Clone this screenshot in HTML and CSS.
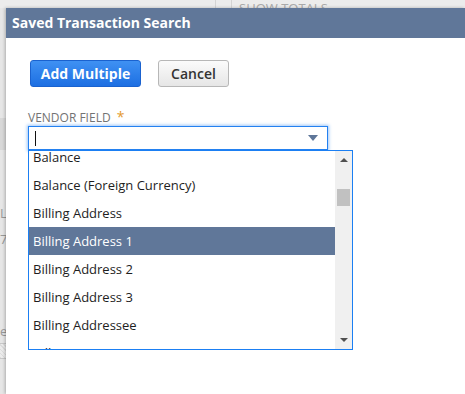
FILE: index.html
```html
<!DOCTYPE html>
<html lang="en">
<head>
    <meta charset="UTF-8">
    <meta name="viewport" content="width=device-width, initial-scale=1.0">
    <title>Saved Transaction Search</title>
    <link rel="stylesheet" href="styles.css">
</head>
<body>
    <div class="page">
        <div class="page-top">
            <span class="divider"></span>
            <span class="divider"></span>
            <span class="page-totals">SHOW TOTALS</span>
        </div>
        <div class="page-side">
            <div class="side-band"></div>
            <div class="side-text">LA</div>
            <div class="side-text">7:</div>
            <div class="side-text low">er</div>
            <div class="side-hatch"></div>
        </div>
    </div>

    <div class="dialog">
        <header class="dialog-title">Saved Transaction Search</header>

        <main class="dialog-body">
            <div class="actions">
                <button type="button" class="btn btn-primary">Add Multiple</button>
                <button type="button" class="btn btn-secondary">Cancel</button>
            </div>

            <label class="field-label" for="vendorField">Vendor Field <span class="required">*</span></label>
            <div class="combo">
                <div class="combo-input" id="vendorField">
                    <span class="caret"></span>
                    <span class="combo-arrow"></span>
                </div>
                <div class="combo-list">
                    <ul class="options">
                        <li>Balance</li>
                        <li>Balance (Foreign Currency)</li>
                        <li>Billing Address</li>
                        <li class="selected">Billing Address 1</li>
                        <li>Billing Address 2</li>
                        <li>Billing Address 3</li>
                        <li>Billing Addressee</li>
                        <li>Billing City</li>
                    </ul>
                    <div class="scrollbar">
                        <span class="scroll-up"></span>
                        <span class="scroll-thumb"></span>
                        <span class="scroll-down"></span>
                    </div>
                </div>
            </div>
        </main>
    </div>
</body>
</html>
```

FILE: styles.css
```css
body {
    margin: 0;
    padding: 0;
    width: 465px;
    height: 394px;
    overflow: hidden;
    background: #e6e6e6;
    font-family: 'Open Sans', 'Liberation Sans', sans-serif;
    color: #222;
}

/* page behind the dialog */
.page-top {
    display: flex;
    height: 8px;
    background: #ececec;
    overflow: hidden;
}

.divider {
    width: 1px;
    height: 8px;
    background: #d4d4d4;
    margin-left: 215px;
}

    .divider + .divider {
        margin-left: 15px;
    }

.page-totals {
    margin-left: 7px;
    margin-top: 0;
    font-size: 13px;
    line-height: 16px;
    color: #a9a9a9;
}

.page-side {
    width: 6px;
    display: flex;
    flex-direction: column;
    color: #999;
    font-size: 13px;
    overflow: hidden;
}

.side-band {
    height: 32px;
    margin-top: 110px;
    background: #d8d8d8;
}

.side-text {
    margin-top: 55px;
    line-height: 16px;
    white-space: nowrap;
}

    .side-text + .side-text {
        margin-top: 10px;
    }

    .side-text.low {
        margin-top: 76px;
    }

.side-hatch {
    height: 14px;
    margin-top: 4px;
    background: repeating-linear-gradient(45deg, #dcdcdc 0 1px, #ececec 1px 3px);
    border-top: 1px solid #c8c8c8;
    border-bottom: 1px solid #c8c8c8;
}

/* dialog */
.dialog {
    position: absolute;
    left: 6px;
    top: 8px;
    right: 0;
    bottom: 0;
    background: #fff;
    box-shadow: -1px 0 3px rgba(0, 0, 0, 0.25);
}

.dialog-title {
    height: 30px;
    line-height: 30px;
    padding-left: 6px;
    background: #607799;
    color: #fff;
    font-size: 14px;
    font-weight: 700;
}

.dialog-body {
    padding: 22px 0 0 22px;
}

.actions {
    display: flex;
    gap: 17px;
    margin-left: 2px;
}

.btn {
    height: 27px;
    padding: 0;
    border-radius: 3px;
    font-family: inherit;
    font-size: 14px;
    cursor: pointer;
}

.btn-primary {
    width: 111px;
    background: linear-gradient(#3f91f3, #1d6fe2);
    border: 1px solid #1a62cf;
    color: #fff;
    font-weight: 700;
}

.btn-secondary {
    width: 71px;
    background: linear-gradient(#fbfbfb, #e6e6e6);
    border: 1px solid #b7b7b7;
    color: #333;
    font-weight: 600;
}

.field-label {
    display: block;
    height: 16px;
    margin-top: 23px;
    font-size: 12px;
    line-height: 16px;
    color: #737373;
    text-transform: uppercase;
}

.required {
    color: #e49a2e;
    font-size: 14px;
    line-height: 1;
    margin-left: 3px;
}

.combo {
    width: 325px;
}

.combo-input {
    display: flex;
    align-items: center;
    justify-content: space-between;
    box-sizing: border-box;
    width: 300px;
    height: 24px;
    padding: 0 9px 0 6px;
    border: 1px solid #2481f0;
    box-shadow: 0 0 3px 1px rgba(40, 130, 240, 0.45);
    background: #fff;
}

.caret {
    width: 1px;
    height: 15px;
    background: #111;
}

.combo-arrow {
    width: 0;
    height: 0;
    border-left: 5px solid transparent;
    border-right: 5px solid transparent;
    border-top: 6px solid #5e7699;
}

.combo-list {
    display: flex;
    box-sizing: border-box;
    height: 200px;
    border: 1px solid #1b7ff3;
    background: #fff;
    overflow: hidden;
    position: relative;
}

.options {
    flex: 1;
    list-style: none;
    margin: -8px 0 0;
    padding: 0;
    font-size: 13px;
}

    .options li {
        height: 28px;
        line-height: 28px;
        padding-left: 4px;
        white-space: nowrap;
        color: #1e1e1e;
    }

        .options li.selected {
            background: #607799;
            color: #fff;
        }

.scrollbar {
    width: 17px;
    background: #f0f0f0;
    display: flex;
    flex-direction: column;
    align-items: center;
}

.scroll-up,
.scroll-down {
    width: 0;
    height: 0;
    border-left: 4px solid transparent;
    border-right: 4px solid transparent;
}

.scroll-up {
    margin-top: 7px;
    border-bottom: 4px solid #505050;
}

.scroll-thumb {
    width: 13px;
    height: 17px;
    margin-top: 27px;
    background: #c1c1c1;
}

.scroll-down {
    margin-top: auto;
    margin-bottom: 7px;
    border-top: 4px solid #505050;
}
```
